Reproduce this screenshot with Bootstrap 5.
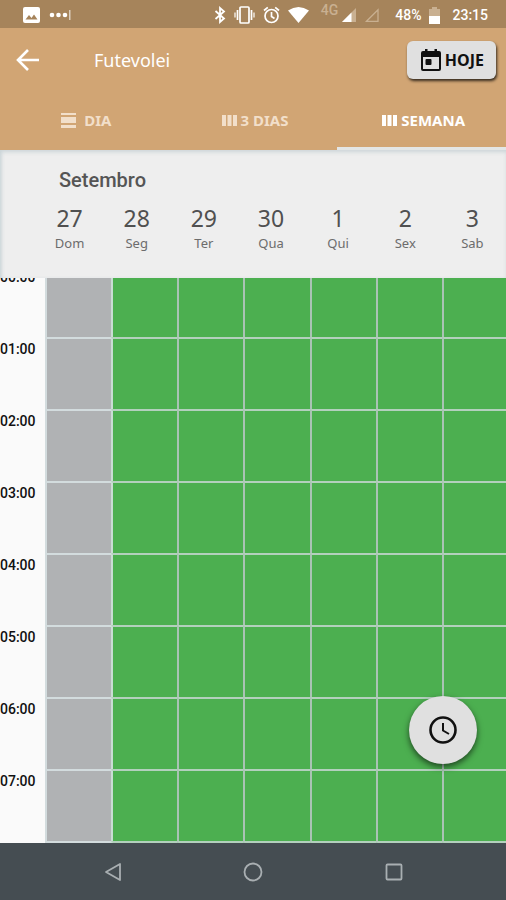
<!DOCTYPE html>
<html lang="pt-BR">
<head>
<meta charset="utf-8">
<meta name="viewport" content="width=device-width, initial-scale=1">
<title>Futevolei</title>
<link href="https://cdn.jsdelivr.net/npm/bootstrap@5.3.0/dist/css/bootstrap.min.css" rel="stylesheet">
<style>
body { font-family: "Noto Sans", "Open Sans", sans-serif; background: #fafafa; }
svg { display: block; flex: none; }
.status-bar { height: 28px; background: #a6845b; color: #fff; font: 500 16px/28px Roboto, sans-serif; padding: 2px 18px 0 23px; }
.net-label { font-size: 14px; line-height: 18px; color: #c9b091; margin-left: 12px; }
.battery { margin-right: 12px; }
.app-bar { height: 64px; background: #d1a574; color: #fff; padding: 0 10px 0 15px; }
.back-link { color: #fff; margin-right: 54px; }
.app-title { font-size: 18px; line-height: 24px; font-weight: 400; }
.today-btn { height: 38px; padding: 0 12px 0 14px; background: #e0e0e0; color: #111; font-size: 16px; font-weight: 700; border: 0; border-radius: 6px; box-shadow: 1px 2px 3px rgba(0,0,0,.75); }
.today-btn:hover { background: #d6d6d6; }
.view-tabs { height: 58px; background: #d1a574; --bs-nav-link-padding-y: 0; }
.view-tabs .nav-link { height: 58px; padding: 2px 12px 0 16px; color: #f2dfca; font-size: 15px; font-weight: 700; border-bottom: 3px solid transparent; border-radius: 0; }
.view-tabs .nav-link.active { color: #fff; border-bottom-color: #e3e6e6; }
.week-head { height: 128px; background: #eee; color: #555; padding: 18px 0 0 36px; box-shadow: inset 0 3px 4px -1px #ccd5d8, inset 3px 0 4px -2px #c3cfd4; z-index: 1; }
.month-name { font: 500 20px/24px Roboto, sans-serif; padding-left: 23px; margin-bottom: 11px; }
.day-num { font-size: 23px; line-height: 31px; color: #505050; }
.day-name { font-size: 13px; line-height: 18px; color: #6c6c6c; }
.calendar { min-height: 0; }
.hours { width: calc(100% + 2px); table-layout: fixed; border-collapse: separate; border-spacing: 0; margin-top: -13px; }
.hours th { width: 45px; height: 72px; padding: 3px 0 0; vertical-align: top; font: 500 14px/19px Roboto, sans-serif; color: #111; }
.hours td { height: 72px; padding: 0; background: #4caf50; border-top: 2px solid #b3d0bd; border-left: 2px solid #a9c3b4; }
.hours td.past { background: #b0b2b4; border-color: #d3dcde; }
.hours td.past + td { border-left-color: #c9dcd4; }
.fab { width: 68px; height: 68px; right: 29px; bottom: 79px; border: 0; background: #e0e0e0; color: #111; box-shadow: 0 3px 6px rgba(0,0,0,.6); z-index: 2; }
.system-nav { height: 57px; background: #454d52; padding: 0 42px 0 43px; z-index: 1; }
.system-nav button { color: #a9afb2; border: 0; background: none; }
</style>
<script src="https://cdn.jsdelivr.net/npm/bootstrap@5.3.0/dist/js/bootstrap.bundle.min.js" defer></script>
</head>
<body>
<div class="vh-100 d-flex flex-column overflow-hidden">
  <div class="status-bar d-flex align-items-center justify-content-between flex-shrink-0">
    <div class="d-flex align-items-center gap-2">
      <svg width="17" height="16" viewBox="0 0 17 16"><rect width="17" height="16" rx="2" fill="#fff"/><path d="M2.500 12.500 6 8l2.500 3L11 7.500l3.500 5z" fill="#a6845b"/></svg>
      <svg width="25" height="12" viewBox="0 0 25 12" fill="#fff"><circle cx="4" cy="6" r="2.300"/><circle cx="10.500" cy="6" r="2.300"/><circle cx="17" cy="6" r="2.300"/><path d="M21 1h1.500v10H21z" opacity=".6"/></svg>
    </div>
    <div class="d-flex align-items-center">
      <svg class="me-2" width="12" height="18" viewBox="0 0 12 18" fill="none" stroke="#fff" stroke-width="1.800"><path d="m1.500 5 8.500 7.500L6 16V2l4 3.500L1.500 13"/></svg>
      <svg class="me-2" width="21" height="18" viewBox="0 0 21 18" fill="none" stroke="#fff" stroke-width="1.700"><rect x="6" y="1" width="9" height="16" rx="1"/><path d="M3.500 4v10M17.500 4v10"/><path d="M1 6.500v5M20 6.500v5" stroke-width="1.200"/></svg>
      <svg class="me-2" width="17" height="18" viewBox="0 0 17 18" fill="none" stroke="#fff" stroke-width="1.700"><circle cx="8.500" cy="10" r="6.500"/><path d="M8.500 6v4.500l3 2M1 4.500 4.800 1.300M16 4.500l-3.800-3.200"/></svg>
      <svg width="21" height="16" viewBox="0 0 21 16" fill="#fff"><path d="M0 3.500Q10.500-3.500 21 3.500L10.500 16z"/></svg>
      <span class="net-label align-self-start me-1">4G</span>
      <svg class="me-2" width="15" height="14" viewBox="0 0 15 14"><path d="M0 14 14 0v14z" fill="#c9b091"/><path d="M0 14 9.500 4.500V14z" fill="#fff"/></svg>
      <svg class="me-3" width="14" height="14" viewBox="0 0 14 14" fill="none" stroke="#c9b091" stroke-width="1.300"><path d="M1.500 13.300 13 1.800v11.500z"/></svg>
      <span class="small me-2">48%</span>
      <svg class="battery" width="11" height="17" viewBox="0 0 11 17"><path d="M3 0h5v2h3v15H0V2h3z" fill="#c9b091"/><path d="M0 9h11v8H0z" fill="#fff"/></svg>
      <span class="small">23:15</span>
    </div>
  </div>

  <header class="app-bar d-flex align-items-center flex-shrink-0">
    <a class="back-link" href="#" aria-label="Voltar"><svg width="25" height="24" viewBox="0 0 25 24" fill="none" stroke="currentColor" stroke-width="2.600"><path d="M24 12H3M13 2 3 12l10 10"/></svg></a>
    <h1 class="app-title mb-0">Futevolei</h1>
    <button type="button" class="today-btn btn ms-auto d-flex align-items-center gap-1">
      <svg width="20" height="22" viewBox="0 0 20 22"><path d="M4 0h2.500v2h7V0H16v2h2a2 2 0 0 1 2 2v16a2 2 0 0 1-2 2H2a2 2 0 0 1-2-2V4a2 2 0 0 1 2-2h2zM2 8v12h16V8z" fill="#111" fill-rule="evenodd"/><rect x="4.500" y="10" width="6" height="6" rx="1" fill="#111"/></svg>HOJE
    </button>
  </header>

  <nav class="view-tabs nav nav-fill flex-nowrap flex-shrink-0">
    <a class="nav-link w-100 d-flex align-items-center justify-content-center gap-2" href="#"><svg width="15" height="15" viewBox="0 0 15 15" fill="currentColor"><path d="M0 0h15v2H0zM0 4h15v6H0zM0 12h15v3H0z"/></svg>DIA</a>
    <a class="nav-link w-100 d-flex align-items-center justify-content-center gap-1" href="#"><svg width="15" height="11" viewBox="0 0 15 11" fill="currentColor"><path d="M0 0h4v11H0zM5.500 0h4v11h-4zM11 0h4v11h-4z"/></svg>3 DIAS</a>
    <a class="nav-link active w-100 d-flex align-items-center justify-content-center gap-1" href="#" aria-current="page"><svg width="15" height="11" viewBox="0 0 15 11" fill="currentColor"><path d="M0 0h4v11H0zM5.500 0h4v11h-4zM11 0h4v11h-4z"/></svg>SEMANA</a>
  </nav>

  <section class="week-head position-relative flex-shrink-0">
    <h2 class="month-name">Setembro</h2>
    <div class="row g-0 text-center flex-nowrap">
      <div class="col"><div class="day-num">27</div><div class="day-name">Dom</div></div>
      <div class="col"><div class="day-num">28</div><div class="day-name">Seg</div></div>
      <div class="col"><div class="day-num">29</div><div class="day-name">Ter</div></div>
      <div class="col"><div class="day-num">30</div><div class="day-name">Qua</div></div>
      <div class="col"><div class="day-num">1</div><div class="day-name">Qui</div></div>
      <div class="col"><div class="day-num">2</div><div class="day-name">Sex</div></div>
      <div class="col"><div class="day-num">3</div><div class="day-name">Sab</div></div>
    </div>
  </section>

  <main class="calendar position-relative flex-grow-1 overflow-hidden">
    <table class="hours">
      <tbody>
        <tr><th scope="row">00:00</th><td class="past"></td><td></td><td></td><td></td><td></td><td></td><td></td></tr>
        <tr><th scope="row">01:00</th><td class="past"></td><td></td><td></td><td></td><td></td><td></td><td></td></tr>
        <tr><th scope="row">02:00</th><td class="past"></td><td></td><td></td><td></td><td></td><td></td><td></td></tr>
        <tr><th scope="row">03:00</th><td class="past"></td><td></td><td></td><td></td><td></td><td></td><td></td></tr>
        <tr><th scope="row">04:00</th><td class="past"></td><td></td><td></td><td></td><td></td><td></td><td></td></tr>
        <tr><th scope="row">05:00</th><td class="past"></td><td></td><td></td><td></td><td></td><td></td><td></td></tr>
        <tr><th scope="row">06:00</th><td class="past"></td><td></td><td></td><td></td><td></td><td></td><td></td></tr>
        <tr><th scope="row">07:00</th><td class="past"></td><td></td><td></td><td></td><td></td><td></td><td></td></tr>
        <tr><th></th><td class="past"></td><td></td><td></td><td></td><td></td><td></td><td></td></tr>
      </tbody>
    </table>
    <button type="button" class="fab position-absolute rounded-circle d-flex align-items-center justify-content-center p-0" aria-label="Escolher horário">
      <svg width="28" height="28" viewBox="0 0 28 28" fill="none" stroke="currentColor"><circle cx="14" cy="14" r="12.500" stroke-width="2.600"/><path d="M14 7v7.500l6 3.500" stroke-width="2"/></svg>
    </button>
  </main>

  <nav class="system-nav d-flex position-relative flex-shrink-0">
    <button type="button" class="col d-flex align-items-center justify-content-center" aria-label="Voltar"><svg width="18" height="20" viewBox="0 0 18 20" fill="none" stroke="currentColor" stroke-width="1.800" stroke-linejoin="round"><path d="M16 2v16L2 10z"/></svg></button>
    <button type="button" class="col d-flex align-items-center justify-content-center" aria-label="Início"><svg width="20" height="20" viewBox="0 0 20 20" fill="none" stroke="currentColor" stroke-width="1.800"><circle cx="10" cy="10" r="8.500"/></svg></button>
    <button type="button" class="col d-flex align-items-center justify-content-center" aria-label="Recentes"><svg width="18" height="18" viewBox="0 0 18 18" fill="none" stroke="currentColor" stroke-width="1.800"><rect x="1.500" y="1.500" width="15" height="15" rx="1"/></svg></button>
  </nav>
</div>
</body>
</html>
